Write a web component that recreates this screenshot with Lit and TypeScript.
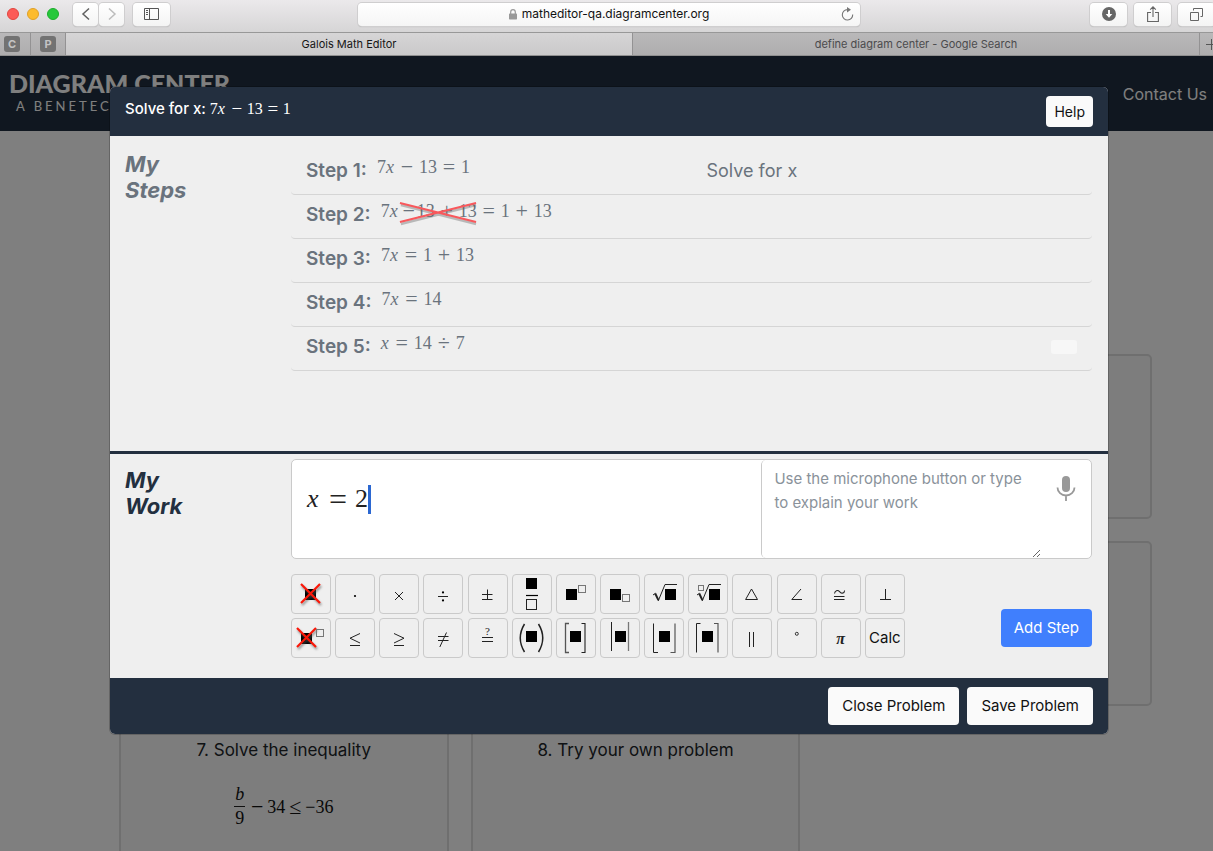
import { LitElement, html, css, svg, nothing } from "lit";
import { customElement } from "lit/decorators.js";

const sq = (x: number, y: number, s = 11) =>
  svg`<rect x=${x} y=${y} width=${s} height=${s} fill="#000" />`;
const box = (x: number, y: number, s = 7, c = "#777") =>
  svg`<rect x=${x + 0.5} y=${y + 0.5} width=${s} height=${s} fill="none" stroke=${c} />`;
const ln = (d: string, w = 1, c = "#222") =>
  svg`<path d=${d} fill="none" stroke=${c} stroke-width=${w} />`;
const cross = (x: number, y: number) => svg`
  <g filter="url(#soft)">
    <path d="M${x} ${y}l19 19M${x + 19} ${y}l-19 19" stroke="#555" stroke-width="2.4" opacity=".6" />
  </g>
  <path d="M${x} ${y}l19 19M${x + 19} ${y}l-19 19" stroke="#fb1708" stroke-width="2.2" />`;
const soft = svg`<defs><filter id="soft" x="-30%" y="-30%" width="170%" height="170%">
  <feOffset dx="1" dy="2" /><feGaussianBlur stdDeviation="1.2" /></filter></defs>`;

const symbols: Array<{ name: string; art: unknown }> = [
  { name: "Cross out", art: svg`${soft}${sq(14, 15)}${cross(10, 10)}` },
  { name: "Dot", art: svg`<circle cx="20" cy="22" r="1.1" />` },
  { name: "Times", art: ln("M16 18l8 8M24 18l-8 8") },
  { name: "Divide", art: svg`${ln("M15 22.5h10", 1)}<circle cx="20" cy="18.4" r="1.1" /><circle cx="20" cy="26.4" r="1.1" />` },
  { name: "Plus or minus", art: ln("M14 20.5h10.5M19.5 15.5v9.5M14 25.5h10.5") },
  { name: "Fraction", art: svg`${sq(14, 4)}${ln("M14 21.5h12", 1.2, "#000")}${box(14, 25, 10, "#222")}` },
  { name: "Exponent", art: svg`${sq(10, 15)}${box(22, 11)}` },
  { name: "Subscript", art: svg`${sq(10, 15)}${box(22, 20)}` },
  { name: "Square root", art: svg`${ln("M9 21l2.6-1.8")}${ln("M11.2 19.5l3.2 6.6", 2)}${ln("M14.2 27L21 10.5h12", 1)}${sq(21, 15)}` },
  { name: "Root", art: svg`${box(10, 11, 5)}${ln("M9 21l2.6-1.8")}${ln("M11.2 19.5l3.2 6.6", 2)}${ln("M14.2 27L21 10.5h12", 1)}${sq(21, 15)}` },
  { name: "Triangle", art: ln("M19.5 15L25.5 25.5H13.6z") },
  { name: "Angle", art: ln("M24 15L14.8 25.5H25") },
  { name: "Congruent", art: svg`${ln("M13.5 19.5c.5-3 3-4 5.3-1.7s4.5 1.5 4.8-1.3", 1.1)}${ln("M13 22.5h10.5M13 25.5h10.5")}` },
  { name: "Perpendicular", art: ln("M20.5 15v10.5M15 25.5h11") },
  { name: "Cross out with exponent", art: svg`${soft}${sq(10, 15)}${cross(6, 10)}${box(25, 11)}` },
  { name: "Less or equal", art: ln("M25 15.5L15 20.2L25 25M15 27.5h10") },
  { name: "Greater or equal", art: ln("M15 15.5L25 20.2L15 25M15 27.5h10") },
  { name: "Not equal", art: ln("M15 18.5h10.5M15 22.5h10.5M16.8 29L23.5 14.5") },
  { name: "Is equal", art: svg`<text x="19.5" y="16.5" class="sym" font-size="11">?</text>${ln("M14 19.5h11M14 23.5h11")}` },
  { name: "Parentheses", art: svg`${ln("M12.5 6Q4 20 12.5 34", 1.5)}${ln("M26.5 6Q35 20 26.5 34", 1.5)}${sq(14, 13)}` },
  { name: "Brackets", art: svg`${ln("M13 5.5H9.5V34.500H13", 1.3, "#555")}${ln("M25.5 5.5H29V34.5H25.5", 1.1)}${sq(14, 13)}` },
  { name: "Absolute value", art: svg`${ln("M11.5 4v29")}${ln("M28.5 4v29", 1.3, "#777")}${sq(15, 13)}` },
  { name: "Floor", art: svg`${ln("M9.5 5.5V34.5H14")}${ln("M31 5.5V34.5H26.5", 1.2, "#555")}${sq(15, 13)}` },
  { name: "Ceiling", art: svg`${ln("M8.5 34.5V5.5H12.5")}${ln("M30 34.5V5.5H26", 1.2, "#555")}${sq(14, 13)}` },
  { name: "Parallel", art: ln("M17.5 14v15M21.5 14v15") },
  { name: "Degree", art: svg`<circle cx="19.8" cy="15.8" r="1.5" fill="none" stroke="#333" stroke-width="1" />` },
  { name: "Pi", art: svg`<text x="19.5" y="26" class="sym pi" font-size="16">π</text>` },
];

type Tok = string | { struck: string[] };
const steps: Array<{ math: Tok[]; note?: string; edit?: boolean }> = [
  { math: ["7", "x", "−", "13", "=", "1"], note: "Solve for x" },
  { math: ["7", "x", { struck: ["−", "13", "+", "13"] }, "=", "1", "+", "13"] },
  { math: ["7", "x", "=", "1", "+", "13"] },
  { math: ["7", "x", "=", "14"] },
  { math: ["x", "=", "14", "÷", "7"], edit: true },
];

const tok = (t: string) =>
  /^[a-z]$/.test(t)
    ? html`<i>${t}</i>`
    : /^[−+=÷≤]$/.test(t)
      ? html`<span class="op">${t}</span>`
      : html`<span>${t}</span>`;

const math = (tokens: Tok[]) =>
  tokens.map((t) =>
    typeof t === "string"
      ? tok(t)
      : html`<span class="struck">${t.struck.map(tok)}<svg viewBox="0 0 82 24" preserveAspectRatio="none" aria-hidden="true">
            <path d="M2 4L81 23M2 23L81 4" stroke="#555" stroke-width="2.5" opacity=".35" />
            <path d="M1 2L81 21M1 21L81 2" stroke="#f8585c" stroke-width="2.3" />
          </svg></span>`
  );

@customElement("app-root")
export class AppRoot extends LitElement {
  static styles = css`
    :host {
      display: flex;
      flex-direction: column;
      height: 100vh;
      overflow: hidden;
      font-family: Inter, "Liberation Sans", sans-serif;
      font-size: 16px;
      line-height: 24px;
      color: #212529;
    }
    * { box-sizing: border-box; }
    button, textarea { font: inherit; margin: 0; }
    h1, h2, p, ol { margin: 0; padding: 0; font-weight: inherit; }
    a { color: inherit; text-decoration: none; }

    /* browser chrome */
    .toolbar {
      flex: none;
      display: flex;
      align-items: center;
      width: calc(100% + 5px);
      height: 32px;
      padding: 0 3px 4px;
      background: linear-gradient(#ebe9eb, #d6d5d6);
    }
    .side { flex: 1; display: flex; align-items: center; gap: 7px; }
    .side.end { justify-content: flex-end; }
    .lights { display: flex; gap: 8px; margin: 0 7px 0 4px; }
    .light { width: 12px; height: 12px; border-radius: 50%; background: #fc5b57; border: 1px solid #e2463f; }
    .light.min { background: #fcbb2d; border-color: #e0a028; }
    .light.max { background: #26c83b; border-color: #1cae2c; }
    .tool {
      display: flex;
      align-items: center;
      justify-content: center;
      width: 37px;
      height: 23px;
      padding: 0;
      color: #5f5f5f;
      background: linear-gradient(#fff, #f4f4f4);
      border: 0;
      border-radius: 4px;
      box-shadow: 0 0 0 1px #cfcecf, 0 1px 1px #aaa;
    }
    .pair { display: flex; gap: 1px; margin-right: 2px; }
    .pair .tool { width: 25px; }
    .tool svg { display: block; }
    .url {
      flex: 0 1 502px;
      display: flex;
      align-items: center;
      height: 23px;
      padding: 0 6px 0 19px;
      background: linear-gradient(#fff, #f5f5f5);
      border-radius: 4px;
      box-shadow: 0 0 0 1px #cfcecf, 0 1px 1px #aaa;
      font-size: 12px;
      color: #111;
    }
    .address { flex: 1; display: flex; align-items: center; justify-content: center; gap: 5px; }
    .reload { border: 0; padding: 0; background: none; display: flex; }
    .tabs {
      flex: none;
      display: flex;
      height: 24px;
      border-top: 1px solid #989898;
      border-bottom: 1px solid #8f8f8f;
      background: linear-gradient(#b9b8b9, #aeadae);
      font-size: 11px;
      line-height: 22px;
      color: #4b4b4d;
    }
    .tab {
      flex: 1;
      text-align: center;
      border-right: 1px solid #939293;
    }
    .tab.on { background: linear-gradient(#d6d5d6, #cac9ca); color: #161616; }
    .tab.pin { flex: none; display: flex; align-items: center; justify-content: flex-end; width: 31px; padding-right: 10px; }
    .tab.pin.wide { width: 35px; padding-right: 9px; }
    .pin b {
      width: 16px;
      height: 16px;
      border-radius: 3px;
      background: #727272;
      color: #c4c4c4;
      line-height: 16px;
    }
    .plus { flex: none; width: 13px; border: 0; padding: 0 0 0 6px; background: none; display: flex; align-items: center; overflow: hidden; }
    .plus svg { flex: none; }

    /* site behind the dialog */
    .page { flex: 1; position: relative; min-height: 0; overflow: hidden; background: #fff; }
    .site {
      display: flex;
      align-items: center;
      justify-content: space-between;
      height: 75px;
      padding: 0 6px 0 9px;
      background: #212f40;
      color: #fff;
    }
    .logo { font-family: Lato, sans-serif; white-space: nowrap; }
    .logo strong { display: block; font-size: 25px; font-weight: 900; line-height: 25px; }
    .logo span { display: block; padding-left: 7px; font-size: 13px; line-height: 20px; letter-spacing: 3px; }
    .cards {
      display: grid;
      grid-template-columns: repeat(3, 1fr);
      grid-auto-rows: 165px;
      gap: 22px;
      padding: 223px 61px 0 119px;
    }
    .card {
      padding: 8px 12px;
      text-align: center;
      background: #fafafa;
      border: 2px solid #dedede;
      border-radius: 5px;
      font-size: 17px;
    }
    .card .math { justify-content: center; margin-top: 21px; color: #111; --gap: 3px; }
    .frac { display: flex; flex-direction: column; align-items: center; line-height: 23px; margin-right: 2px; }
    .frac span:first-child { font-style: italic; border-bottom: 1px solid #222; padding: 0 1px; }

    /* dialog */
    .shade {
      position: absolute;
      inset: 0;
      padding: 31px 105px 0 110px;
      background: rgba(0, 0, 0, 0.5);
    }
    .dialog {
      border-radius: 5px;
      overflow: hidden;
      background: #efefef;
      box-shadow: 0 0 0 1px rgba(0, 0, 0, 0.2);
    }
    .head {
      display: flex;
      align-items: flex-start;
      justify-content: space-between;
      padding: 9px 15px;
      background: #232f3f;
      color: #fff;
    }
    .title { display: flex; gap: 4px; align-items: center; line-height: 26px; font-size: 15px; font-weight: 500; }
    .btn {
      height: 38px;
      padding: 0 14px;
      border: 0;
      border-radius: 4px;
      background: #fafafa;
      color: #111;
      white-space: nowrap;
      font-size: 15px;
    }
    .btn.small { height: 31px; padding: 0 8px; font-size: 14px; }
    .btn.primary { background: #407ffd; color: #fff; }
    .row { display: grid; grid-template-columns: 166px 1fr; padding: 15px 16px 0 15px; }
    .row.steps { min-height: 315px; }
    .row.work { border-top: 3px solid #232f3f; padding-top: 5px; padding-bottom: 20px; }
    .name { font-size: 22px; font-weight: 700; font-style: italic; line-height: 26px; width: 80px; color: #6a737d; }
    .work .name { color: #232f3f; padding-top: 8px; }
    .list { list-style: none; }
    .step {
      display: grid;
      grid-template-columns: 1fr 1fr;
      align-items: center;
      height: 44px;
      padding: 0 15px 4px;
      border-bottom: 1px solid #d5d5d5;
      border-radius: 4px;
      color: #6a737d;
      font-size: 18px;
    }
    .eq { display: flex; gap: 10px; align-items: center; }
    .eq strong { font-size: 19px; font-weight: 600; }
    .eq .math { padding-bottom: 8px; }
    .note { padding-left: 15px; }
    .edit { justify-self: end; width: 26px; height: 14px; padding: 0; border: 0; border-radius: 3px; background: #f7f7f7; }

    .math {
      display: flex;
      align-items: center;
      font-family: "Liberation Serif", serif;
      font-size: 18px;
      font-weight: 400;
      --op: 14px;
      --sign: 22px;
      --gap: 5px;
      --var: 9px;
    }
    .math i { width: var(--var); }
    .math .op { display: flex; justify-content: center; width: var(--op); margin: 0 var(--gap); font-size: var(--sign); }
    .title .math { font-size: 16px; --op: 12px; --sign: 19px; --gap: 4px; }
    .struck { position: relative; display: flex; align-items: center; }
    .struck .op:first-child { margin: 0 1px 0 3px; }
    .struck svg { position: absolute; left: 0; top: 2px; width: 100%; height: 24px; overflow: visible; }

    .editor {
      display: grid;
      grid-template-columns: 47fr 33fr;
      height: 100px;
      background: #fff;
      border: 1px solid #cacaca;
      border-radius: 5px;
    }
    .field { display: flex; align-items: center; padding: 0 15px 20px; }
    .field .math { font-size: 26px; line-height: 30px; color: #222; --op: 20px; --sign: 32px; --gap: 7px; --var: 14px; }
    .caret { width: 3px; height: 29px; background: #2b67d1; }
    .explain { display: flex; border-left: 1px solid #cacaca; border-radius: 5px; }
    .explain textarea {
      flex: 1;
      min-width: 0;
      height: 98px;
      padding: 7px 12px;
      border: 0;
      border-radius: 5px;
      background: #fff;
      resize: both;
      outline: 0;
      font-size: 15px;
      line-height: 24px;
    }
    .explain textarea::placeholder { color: #8a929a; opacity: 1; }
    .mic { align-self: flex-start; width: 50px; padding: 15px 0 0; border: 0; background: none; }
    .mic svg { display: block; margin: 0 auto; }
    .tools { display: flex; justify-content: space-between; align-items: flex-end; gap: 16px; padding-top: 15px; }
    .palette {
      display: grid;
      grid-template-columns: repeat(14, 40px);
      justify-content: space-between;
      row-gap: 4px;
      flex: 0 1 614px;
    }
    .key {
      width: 40px;
      height: 40px;
      padding: 0;
      border: 1px solid #cacaca;
      border-radius: 4px;
      background: #efefef;
      color: #111;
      font-size: 15px;
    }
    .key svg { display: block; }
    .sym { font-family: "Liberation Serif", serif; text-anchor: middle; fill: #222; }
    .pi { font-style: italic; font-weight: bold; }
    .tools .btn { margin-bottom: 11px; }
    .tools .primary { padding: 0 13px; }
    .foot { display: flex; justify-content: flex-end; gap: 8px; padding: 9px 15px; background: #232f3f; }
  `;

  render() {
    return html`
      <div class="toolbar">
        <div class="side">
          <div class="lights"><span class="light"></span><span class="light min"></span><span class="light max"></span></div>
          <div class="pair">
            <button class="tool" aria-label="Back"><svg width="10" height="14" viewBox="0 0 10 14"><path d="M8 1.5L2 7l6 5.5" fill="none" stroke="#606060" stroke-width="1.5" /></svg></button>
            <button class="tool" aria-label="Forward"><svg width="10" height="14" viewBox="0 0 10 14"><path d="M2 1.5L8 7l-6 5.5" fill="none" stroke="#bcbcbc" stroke-width="1.5" /></svg></button>
          </div>
          <button class="tool" aria-label="Sidebar"><svg width="15" height="12" viewBox="0 0 15 12"><path d="M.5 .5h14v11H.5zM5.5 .5v11M2 2.500h2M2 4.500h2M2 6.500h2" fill="none" stroke="#555" /></svg></button>
        </div>
        <div class="url">
          <div class="address">
            <svg width="8" height="11" viewBox="0 0 8 11"><rect y="4.5" width="8" height="6" rx=".7" fill="#999" /><path d="M1.7 5V3a2.3 2.3 0 0 1 4.600 0v2" fill="none" stroke="#999" stroke-width="1.2" /></svg>
            <span>matheditor-qa.diagramcenter.org</span>
          </div>
          <button class="reload" aria-label="Reload"><svg width="13" height="14" viewBox="0 0 13 14"><path d="M11.7 7.5A5.2 5.2 0 1 1 6.5 2.6H8" fill="none" stroke="#777" stroke-width="1.1" /><path d="M6 0l4 2.7L6 5.4z" fill="#777" /></svg></button>
        </div>
        <div class="side end">
          <button class="tool" aria-label="Downloads"><svg width="14" height="14" viewBox="0 0 14 14"><circle cx="7" cy="7" r="7" fill="#666" /><path d="M7 3v5" stroke="#fff" stroke-width="2" /><path d="M3.7 7h6.6L7 10.8z" fill="#fff" /></svg></button>
          <button class="tool" aria-label="Share"><svg width="12" height="16" viewBox="0 0 12 16"><path d="M4 6.5H.6v9h10.8v-9H8M6 11V1M3.2 3.6L6 .8l2.8 2.8" fill="none" stroke="#666" stroke-width="1.1" /></svg></button>
          <button class="tool" aria-label="All tabs"><svg width="13" height="13" viewBox="0 0 13 13"><path d="M.5 4.5h8v8h-8zM3.5 2.5v-2h9v8h-2" fill="none" stroke="#666" /></svg></button>
        </div>
      </div>
      <div class="tabs">
        <a class="tab pin" href="#c"><b>C</b></a>
        <a class="tab pin wide" href="#p"><b>P</b></a>
        <a class="tab on" href="#editor">Galois Math Editor</a>
        <a class="tab" href="#search">define diagram center - Google Search</a>
        <button class="plus" aria-label="New tab"><svg width="11" height="11" viewBox="0 0 11 11"><path d="M5.5 0v11M0 5.5h11" stroke="#555" /></svg></button>
      </div>
      <div class="page">
        <header class="site">
          <a class="logo" href="#home"><strong>DIAGRAM CENTER</strong><span>A BENETECH</span></a>
          <a href="#contact">Contact Us</a>
        </header>
        <main class="cards">
          ${[1, 2, 3, 4, 5, 6].map(() => html`<div class="card"></div>`)}
          <div class="card">
            <p>7. Solve the inequality</p>
            <div class="math"><span class="frac"><span>b</span><span>9</span></span>${math(["−", "34", "≤"])}<span>−36</span></div>
          </div>
          <div class="card"><p>8. Try your own problem</p></div>
        </main>
        <div class="shade">
          <section class="dialog" role="dialog" aria-label="Math problem">
            <div class="head">
              <h1 class="title">Solve for x: <span class="math">${math(["7", "x", "−", "13", "=", "1"])}</span></h1>
              <button class="btn small">Help</button>
            </div>
            <div class="row steps">
              <h2 class="name">My Steps</h2>
              <ol class="list">
                ${steps.map(
                  (s, i) => html`<li class="step">
                    <div class="eq"><strong>Step ${i + 1}:</strong><span class="math">${math(s.math)}</span></div>
                    ${s.note ? html`<span class="note">${s.note}</span>` : nothing}
                    ${s.edit ? html`<button class="edit" aria-label="Edit step"></button>` : nothing}
                  </li>`
                )}
              </ol>
            </div>
            <div class="row work">
              <h2 class="name">My Work</h2>
              <div>
                <div class="editor">
                  <div class="field"><span class="math">${math(["x", "=", "2"])}</span><span class="caret"></span></div>
                  <div class="explain">
                    <textarea aria-label="Explain your work" placeholder="Use the microphone button or type to explain your work"></textarea>
                    <button class="mic" aria-label="Dictate"><svg width="20" height="27" viewBox="0 0 20 27"><rect x="6" y="1" width="8" height="16" rx="4" fill="#999" /><path d="M1.5 12.5a8.5 8 0 0 0 17 0M10 20.5V26" fill="none" stroke="#999" stroke-width="1.8" /></svg></button>
                  </div>
                </div>
                <div class="tools">
                  <div class="palette">
                    ${symbols.map(
                      (s) => html`<button class="key" aria-label=${s.name}><svg width="38" height="38" viewBox="1 1 38 38">${s.art}</svg></button>`
                    )}
                    <button class="key">Calc</button>
                  </div>
                  <button class="btn primary">Add Step</button>
                </div>
              </div>
            </div>
            <div class="foot">
              <button class="btn">Close Problem</button>
              <button class="btn">Save Problem</button>
            </div>
          </section>
        </div>
      </div>
    `;
  }
}
